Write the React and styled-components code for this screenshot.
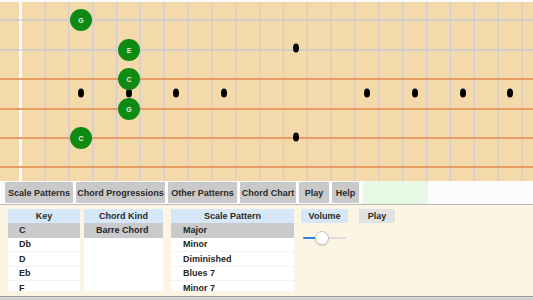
import React from 'react';
import styled, { createGlobalStyle } from 'styled-components';

const GlobalStyle = createGlobalStyle`
  html, body {
    margin: 0;
    padding: 0;
    background: #ffffff;
    font-family: "Liberation Sans", Arial, sans-serif;
  }
`;

const Page = styled.div`
  width: 533px;
  height: 300px;
  display: flex;
  flex-direction: column;
  padding-top: 2px;
  box-sizing: border-box;
  background: #fbfbfb;
  overflow: hidden;
`;

const Board = styled.svg`
  display: block;
  flex: none;
`;

const TabBar = styled.div`
  height: 24px;
  display: flex;
  align-items: center;
  gap: 3px;
  padding: 0 0 0 5px;
  background: #fcfcfc;
  border-bottom: 1px solid #b9b9b9;
  box-sizing: border-box;
  flex: none;
`;

const TabButton = styled.div`
  width: ${(p) => p.$w}px;
  height: 21px;
  display: flex;
  align-items: center;
  justify-content: center;
  background: #c9c9c9;
  border-radius: 1px;
  font-size: 9px;
  font-weight: bold;
  color: #2a2a2a;
  white-space: nowrap;
`;

const StatusLight = styled.div`
  width: 65px;
  height: 23px;
  margin-left: 1px;
  background: #e7f9e4;
`;

const Panel = styled.div`
  height: 91px;
  display: flex;
  align-items: flex-start;
  padding: 4px 0 0 8px;
  background: #fdf5e4;
  box-sizing: border-box;
  flex: none;
`;

const List = styled.div`
  width: ${(p) => p.$w}px;
  height: 82px;
  margin-right: ${(p) => p.$gap}px;
  background: #ffffff;
  overflow: hidden;
  display: flex;
  flex-direction: column;
`;

const ListHeader = styled.div`
  height: 14px;
  flex: none;
  display: flex;
  align-items: center;
  justify-content: center;
  background: #d6e8f8;
  font-size: 9px;
  font-weight: bold;
  color: #2a2a2a;
`;

const Row = styled.div`
  height: 14.5px;
  flex: none;
  display: flex;
  align-items: center;
  padding-left: ${(p) => p.$indent}px;
  background: ${(p) => (p.$selected ? '#cacacd' : '#ffffff')};
  border-bottom: 1px solid ${(p) => (p.$selected ? '#cacacd' : '#f3f3f3')};
  box-sizing: border-box;
  font-size: 9px;
  font-weight: bold;
  color: #262626;
`;

const VolumeColumn = styled.div`
  display: flex;
  flex-direction: column;
  margin-right: 11px;
`;

const Label = styled.div`
  width: ${(p) => (p.$button ? 36 : 47)}px;
  height: 14px;
  display: flex;
  align-items: center;
  justify-content: center;
  background: ${(p) => (p.$button ? '#e2e2e2' : '#d6e8f8')};
  font-size: 9px;
  font-weight: bold;
  color: #2a2a2a;
`;

const Slider = styled.div`
  position: relative;
  width: 43px;
  height: 16px;
  margin: 7px 0 0 2px;
`;

const Track = styled.div`
  position: absolute;
  left: 0;
  right: 0;
  top: 7px;
  height: 2px;
  border-radius: 1px;
  background: linear-gradient(to right, #2f7fe0 0, #2f7fe0 14px, #dcdcdc 14px);
`;

const Thumb = styled.div`
  position: absolute;
  left: 12px;
  top: 1px;
  width: 14px;
  height: 14px;
  border-radius: 50%;
  background: #ffffff;
  border: 1px solid #c4c4c4;
  box-sizing: border-box;
  box-shadow: 0 1px 2px rgba(0, 0, 0, 0.15);
`;

const BottomBar = styled.div`
  flex: 1;
  background: #d2d2d2;
  border-top: 1px solid #9a9a9a;
`;

const STRINGS = [
  { y: 20, color: '#c4cad5', w: 1.6 },
  { y: 50, color: '#c4cad5', w: 1.6 },
  { y: 79, color: '#e89b66', w: 2 },
  { y: 109, color: '#e89b66', w: 2 },
  { y: 138, color: '#e89b66', w: 2 },
  { y: 167, color: '#e89b66', w: 2 },
];

const FRETS = Array.from({ length: 21 }, (_, i) => 45 + i * 23.85);

const DOTS = [
  [81, 93], [129, 93], [176, 93], [224, 93],
  [367, 93], [415, 93], [463, 93], [510, 93],
  [296, 48], [296, 137],
];

const NOTES = [
  { x: 81, y: 20, n: 'G' },
  { x: 129, y: 50, n: 'E' },
  { x: 129, y: 79, n: 'C' },
  { x: 129, y: 109, n: 'G' },
  { x: 81, y: 138, n: 'C' },
];

const Fretboard = () => (
  <Board width="533" height="179" viewBox="0 2 533 179">
    <rect x="0" y="2" width="533" height="179" fill="#f4d9aa" />
    {FRETS.map((x) => (
      <line key={x} x1={x} y1="2" x2={x} y2="181" stroke="#cdcdd2" strokeWidth="1.2" />
    ))}
    <rect x="19" y="2" width="3" height="179" fill="#ffffff" />
    {STRINGS.map((s) => (
      <line key={s.y} x1="0" y1={s.y} x2="533" y2={s.y} stroke={s.color} strokeWidth={s.w} />
    ))}
    {DOTS.map(([x, y]) => (
      <ellipse key={`${x}-${y}`} cx={x} cy={y} rx="3" ry="4.5" fill="#000" />
    ))}
    {NOTES.map((n) => (
      <g key={`${n.x}-${n.y}`}>
        <circle cx={n.x} cy={n.y} r="11" fill="#0f8a12" />
        <text
          x={n.x}
          y={n.y + 2.5}
          textAnchor="middle"
          fontSize="7"
          fontWeight="bold"
          fontFamily="Liberation Sans, Arial, sans-serif"
          fill="#e3efe3"
        >
          {n.n}
        </text>
      </g>
    ))}
  </Board>
);

const TABS = [
  { label: 'Scale Patterns', w: 68 },
  { label: 'Chord Progressions', w: 89 },
  { label: 'Other Patterns', w: 69 },
  { label: 'Chord Chart', w: 56 },
  { label: 'Play', w: 30 },
  { label: 'Help', w: 27 },
];

const PickList = ({ title, items, selected, width, gap, indent }) => (
  <List $w={width} $gap={gap}>
    <ListHeader>{title}</ListHeader>
    {items.map((item) => (
      <Row key={item} $selected={item === selected} $indent={indent}>
        {item}
      </Row>
    ))}
  </List>
);

const App = () => (
  <>
    <GlobalStyle />
    <Page>
      <Fretboard />
      <TabBar>
        {TABS.map((t) => (
          <TabButton key={t.label} $w={t.w}>{t.label}</TabButton>
        ))}
        <StatusLight />
      </TabBar>
      <Panel>
        <PickList
          title="Key"
          items={['C', 'Db', 'D', 'Eb', 'F']}
          selected="C"
          width={72}
          gap={4}
          indent={11}
        />
        <PickList
          title="Chord Kind"
          items={['Barre Chord']}
          selected="Barre Chord"
          width={79}
          gap={8}
          indent={12}
        />
        <PickList
          title="Scale Pattern"
          items={['Major', 'Minor', 'Diminished', 'Blues 7', 'Minor 7']}
          selected="Major"
          width={123}
          gap={7}
          indent={12}
        />
        <VolumeColumn>
          <Label>Volume</Label>
          <Slider>
            <Track />
            <Thumb />
          </Slider>
        </VolumeColumn>
        <Label $button>Play</Label>
      </Panel>
      <BottomBar />
    </Page>
  </>
);

export default App;
